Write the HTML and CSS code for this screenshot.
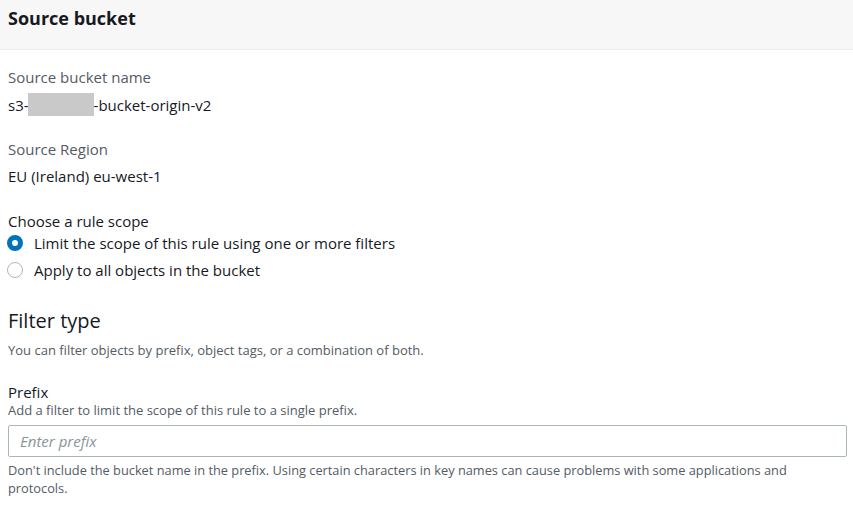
FILE: index.html
```html
<!DOCTYPE html>
<html>
<head>
<meta charset="utf-8">
<link rel="stylesheet" href="styles.css">
</head>
<body>
<div class="panel">
  <div class="panel-header"><h2>Source bucket</h2></div>
  <div class="panel-body">
    <div class="kv">
      <div class="kv-label">Source bucket name</div>
      <div class="kv-value">s3-<span class="redact"></span>-bucket-origin-v2</div>
    </div>
    <div class="kv">
      <div class="kv-label">Source Region</div>
      <div class="kv-value">EU (Ireland) eu-west-1</div>
    </div>
    <div class="field">
      <div class="field-label">Choose a rule scope</div>
      <label class="radio"><span class="radio-dot checked"></span>Limit the scope of this rule using one or more filters</label>
      <label class="radio"><span class="radio-dot"></span>Apply to all objects in the bucket</label>
    </div>
    <h3 class="section-title">Filter type</h3>
    <p class="section-desc">You can filter objects by prefix, object tags, or a combination of both.</p>
    <div class="field prefix">
      <div class="field-label">Prefix</div>
      <div class="field-desc">Add a filter to limit the scope of this rule to a single prefix.</div>
      <div class="input"><span class="placeholder">Enter prefix</span></div>
      <div class="hint">Don't include the bucket name in the prefix. Using certain characters in key names can cause problems with some applications and protocols.</div>
    </div>
  </div>
</div>
</body>
</html>
```

FILE: styles.css
```css
* { box-sizing: border-box; }
html, body { margin: 0; padding: 0; background: #fff; }
body {
  font-family: "Open Sans", "Noto Sans", sans-serif;
  color: #16191f;
  font-size: 15px;
}
.panel-header {
  background: #f7f7f7;
  border-bottom: 1px solid #eaeded;
  height: 50px;
  padding: 6px 8px 0;
}
.panel-header h2 {
  margin: 0;
  font-size: 18px;
  font-weight: 700;
  line-height: 24px;
}
.panel-body {
  padding: 17px 6px 0 8px;
}
.kv { margin-bottom: 23px; }
.kv-label {
  color: #545b64;
  line-height: 20px;
  margin-bottom: 6px;
}
.kv-value {
  line-height: 22px;
  display: flex;
  align-items: center;
}
.redact {
  display: inline-block;
  width: 66px;
  height: 23px;
  background: #c9c9c9;
  margin-left: -1px;
}
.field { display: flex; flex-direction: column; }
.field-label { line-height: 16px; margin-top: 3px; }
.radio {
  display: flex;
  align-items: center;
  gap: 11px;
  line-height: 20px;
  height: 27px;
}
.radio-dot {
  width: 16px;
  height: 16px;
  border-radius: 50%;
  border: 1px solid #aab7b8;
  background: #fff;
  flex: none;
  margin-left: -1px;
}
.radio-dot.checked {
  border: 5px solid #0073bb;
}
.section-title {
  margin: 25px 0 0;
  font-size: 20px;
  font-weight: 400;
  line-height: 26px;
}
.section-desc {
  margin: 8px 0 0;
  font-size: 13px;
  color: #545b64;
  line-height: 17px;
}
.prefix .field-label { margin-top: 23px; line-height: 20px; }
.field-desc {
  font-size: 13px;
  color: #545b64;
  line-height: 17px;
}
.input {
  margin-top: 6px;
  height: 32px;
  border: 1px solid #aab7b8;
  border-radius: 2px;
  display: flex;
  align-items: center;
  padding: 0 11px;
}
.placeholder {
  color: #879596;
  font-style: italic;
}
.hint {
  margin-top: 4px;
  font-size: 12.8px;
  color: #545b64;
  line-height: 18px;
}
```
